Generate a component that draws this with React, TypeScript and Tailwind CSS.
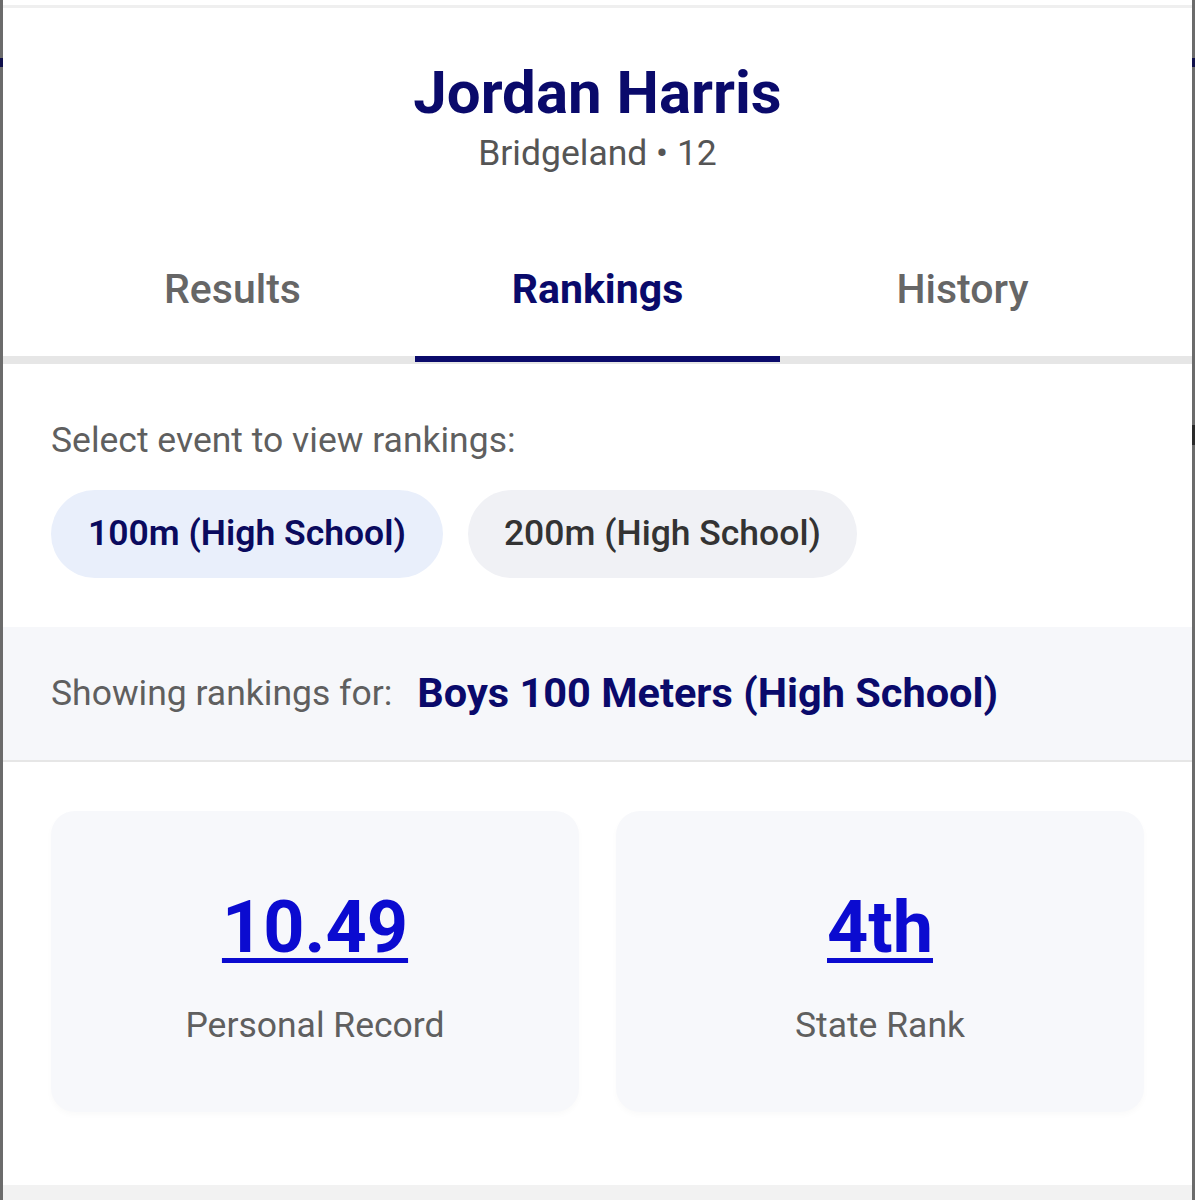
import { useState } from "react";

const events = ["100m (High School)", "200m (High School)"];
const tabs = ["Results", "Rankings", "History"];

const StatCard = ({ value, label }: { value: string; label: string }) => (
  <div className="flex flex-col items-center rounded-[24px] bg-[#f7f8fb] pt-[75px] pb-[67px] shadow-[0_3px_6px_rgba(0,0,0,0.025)]">
    <a
      href="#"
      className="text-[72px] font-bold leading-[84px] text-[#0b0bd0] underline decoration-[5px] underline-offset-[6px]"
    >
      {value}
    </a>
    <span className="mt-[35px] text-[35.5px] leading-[40px] text-[#5f5f5f]">{label}</span>
  </div>
);

const App = () => {
  const [tab, setTab] = useState(1);
  const [event, setEvent] = useState(0);

  return (
    <div className="flex h-[1200px] w-[1195px] overflow-hidden bg-white font-['Roboto',sans-serif]">
      {/* page edge behind the sheet */}
      <div className="flex w-[3px] flex-col bg-[#6b6b6b]">
        <div className="mt-[58px] h-[9px] bg-[#10104a]" />
      </div>

      <div className="flex flex-1 flex-col">
        <div className="mt-[5px] h-[3px] bg-[#efefef]" />

        <header className="flex flex-col items-center pt-[51px]">
          <h1 className="text-[60px] font-bold leading-[68px] text-[#0a0a6b]">Jordan Harris</h1>
          <p className="mt-[6px] text-[35.5px] leading-[40px] text-[#555555]">Bridgeland • 12</p>
        </header>

        <nav className="mt-[93px] grid grid-cols-3 px-[47px] pb-[44px]">
          {tabs.map((t, i) => (
            <button
              key={t}
              onClick={() => setTab(i)}
              className={
                i === tab
                  ? "text-center text-[41px] font-bold leading-[46px] text-[#0a0a6b]"
                  : "text-center text-[41px] font-medium leading-[46px] text-[#666666]"
              }
            >
              {t}
            </button>
          ))}
        </nav>
        <div className="grid h-[8px] grid-cols-3 bg-[#e6e6e6] px-[47px]">
          {tabs.map((t, i) => (
            <div key={t} className={i === tab ? "h-[6px] bg-[#0a0a6b]" : "h-[6px]"} />
          ))}
        </div>

        <section className="px-[48px] pt-[56px]">
          <p className="text-[35.5px] leading-[40px] text-[#5f5f5f]">Select event to view rankings:</p>
          <div className="mt-[30px] flex gap-[25px]">
            {events.map((e, i) => (
              <button
                key={e}
                onClick={() => setEvent(i)}
                className={
                  i === event
                    ? "h-[88px] rounded-full bg-[#e9effb] px-[37px] text-[35.5px] font-semibold text-[#0a0a5e]"
                    : "h-[88px] rounded-full bg-[#f0f1f5] px-[36px] text-[35.5px] font-medium text-[#333333]"
                }
              >
                {e}
              </button>
            ))}
          </div>
        </section>

        <div className="mt-[49px] flex h-[135px] items-center gap-[25px] border-b-2 border-[#e6e6e6] bg-[#f6f7fa] px-[48px]">
          <span className="text-[35.5px] text-[#5f5f5f]">Showing rankings for:</span>
          <span className="text-[41.5px] font-bold text-[#0a0a6b]">Boys 100 Meters (High School)</span>
        </div>

        <div className="mt-[49px] grid grid-cols-2 gap-[37px] px-[48px]">
          <StatCard value="10.49" label="Personal Record" />
          <StatCard value="4th" label="State Rank" />
        </div>

        <div className="mt-[73px] flex-1 bg-[#f2f2f2]" />
      </div>

      <div className="flex w-[3px] flex-col bg-[#6b6b6b]">
        <div className="mt-[58px] h-[9px] bg-[#10104a]" />
        <div className="mt-[358px] h-[20px] bg-[#2a2a2a]" />
      </div>
    </div>
  );
};

export default App;
